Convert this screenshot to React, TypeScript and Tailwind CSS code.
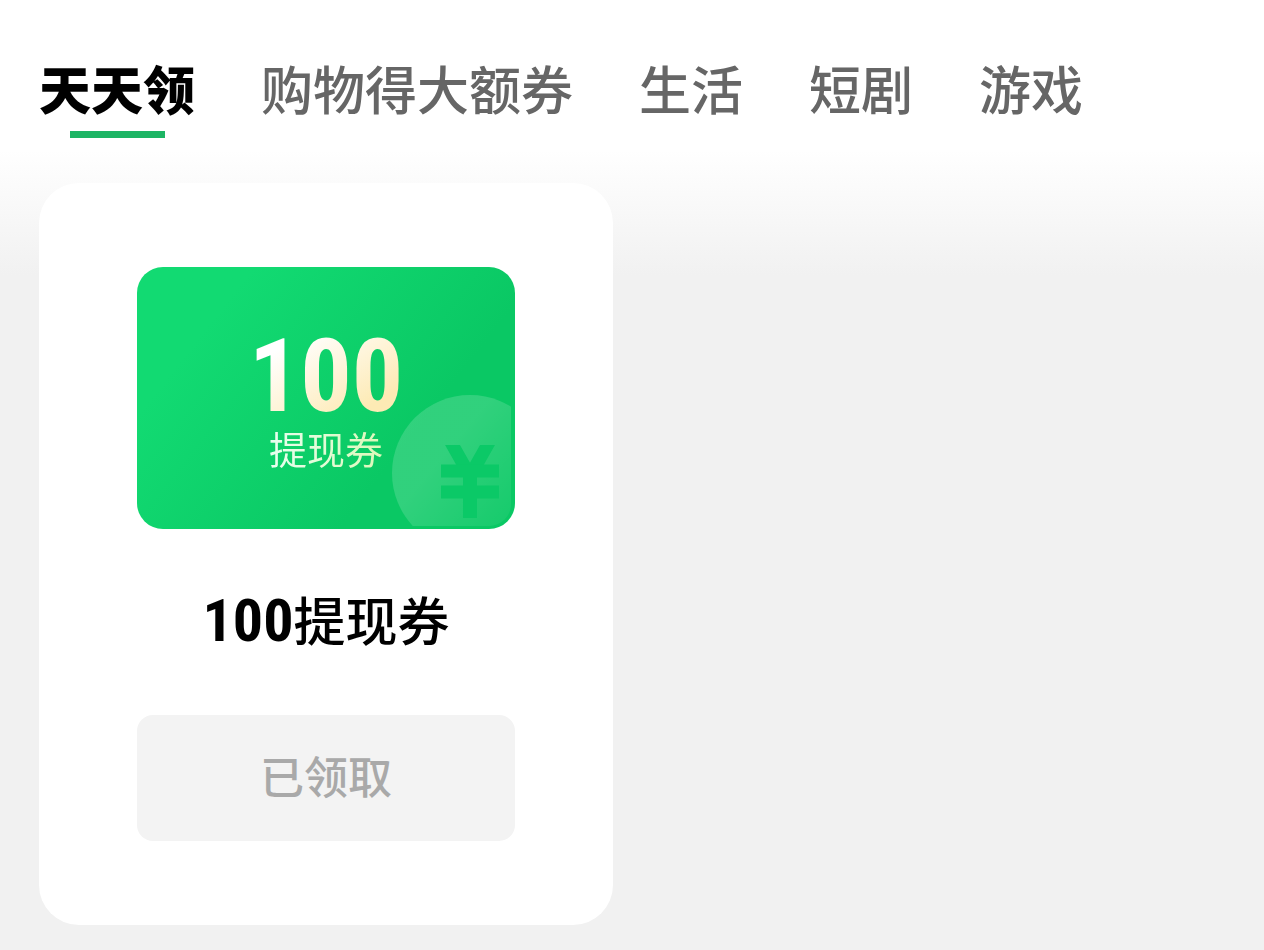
import { useState } from "react";

const tabs = ["天天领", "购物得大额券", "生活", "短剧", "游戏"];

function CoinMark() {
  return (
    <svg
      viewBox="0 0 124 134"
      className="absolute right-0 bottom-0 h-[134px] w-[124px]"
      aria-hidden="true"
    >
      <defs>
        <linearGradient id="coin" x1="0.4" y1="0.3" x2="1" y2="0.8">
          <stop offset="0" stopColor="#fff" stopOpacity="0.16" />
          <stop offset="1" stopColor="#fff" stopOpacity="0.02" />
        </linearGradient>
        <clipPath id="coin-edge">
          <rect y="-30" width="120" height="161" rx="22" />
          <rect width="60" height="131" />
        </clipPath>
        <clipPath id="yen-top">
          <rect y="50" width="124" height="84" />
        </clipPath>
      </defs>
      <circle cx="79" cy="78" r="78" fill="url(#coin)" clipPath="url(#coin-edge)" />
      <g stroke="#0bc967" fill="none">
        <path d="M57 42 79 81 101 42" strokeWidth="13" clipPath="url(#yen-top)" />
        <path d="M50 76h58M50 97h58" strokeWidth="13" />
        <path d="M79 72v51" strokeWidth="14" />
      </g>
    </svg>
  );
}

function Coupon({ amount, label }: { amount: number; label: string }) {
  return (
    <div className="relative flex h-[262px] flex-col items-center rounded-[26px] bg-linear-128 from-[#12da72] from-20% to-[#0ac864] to-70% pt-[62px]">
      <CoinMark />
      <span className="bg-linear-to-br from-white from-20% to-[#fdeab4] to-80% bg-clip-text font-['Roboto_Condensed','Open_Sans',sans-serif] text-[102px] leading-[94px] font-bold text-transparent">
        {amount}
      </span>
      <span className="bg-linear-to-r from-[#e8fff0] to-[#dcf8b8] bg-clip-text text-[38px] leading-[50px] text-transparent">
        {label}
      </span>
    </div>
  );
}

function CouponCard({ amount, label }: { amount: number; label: string }) {
  return (
    <article className="w-full max-w-[574px] rounded-[40px] bg-white px-[98px] py-[84px]">
      <Coupon amount={amount} label={label} />
      <h2 className="mt-[52px] flex h-[76px] items-baseline justify-center text-[52px] leading-[76px] font-medium text-black">
        <span className="font-['Roboto_Condensed','Open_Sans',sans-serif] text-[60px] font-bold">
          {amount}
        </span>
        {label}
      </h2>
      <button
        type="button"
        disabled
        className="mt-[58px] h-[126px] w-full rounded-2xl bg-[#f3f3f3] pb-[6px] text-[44px] leading-[64px] font-medium text-[#a9a9a9]"
      >
        已领取
      </button>
    </article>
  );
}

export default function App() {
  const [active, setActive] = useState(tabs[0]);

  return (
    <main
      lang="zh-CN"
      className="min-h-screen bg-[#f1f1f1] bg-linear-to-b from-white from-[150px] to-[#f1f1f1] to-[275px] px-[39px] pt-[50px] pb-6 font-['Noto_Sans_CJK_SC',sans-serif]"
    >
      <nav className="mb-[45px] flex gap-[66px]">
        {tabs.map((tab) => (
          <button
            key={tab}
            type="button"
            onClick={() => setActive(tab)}
            className={`flex shrink-0 flex-col items-center text-[52px] leading-[76px] ${
              tab === active ? "font-black text-black" : "font-medium text-[#666]"
            }`}
          >
            {tab}
            {tab === active && <span className="mt-[5px] h-[7px] w-[95px] bg-[#1db564]" />}
          </button>
        ))}
      </nav>
      <CouponCard amount={100} label="提现券" />
    </main>
  );
}
